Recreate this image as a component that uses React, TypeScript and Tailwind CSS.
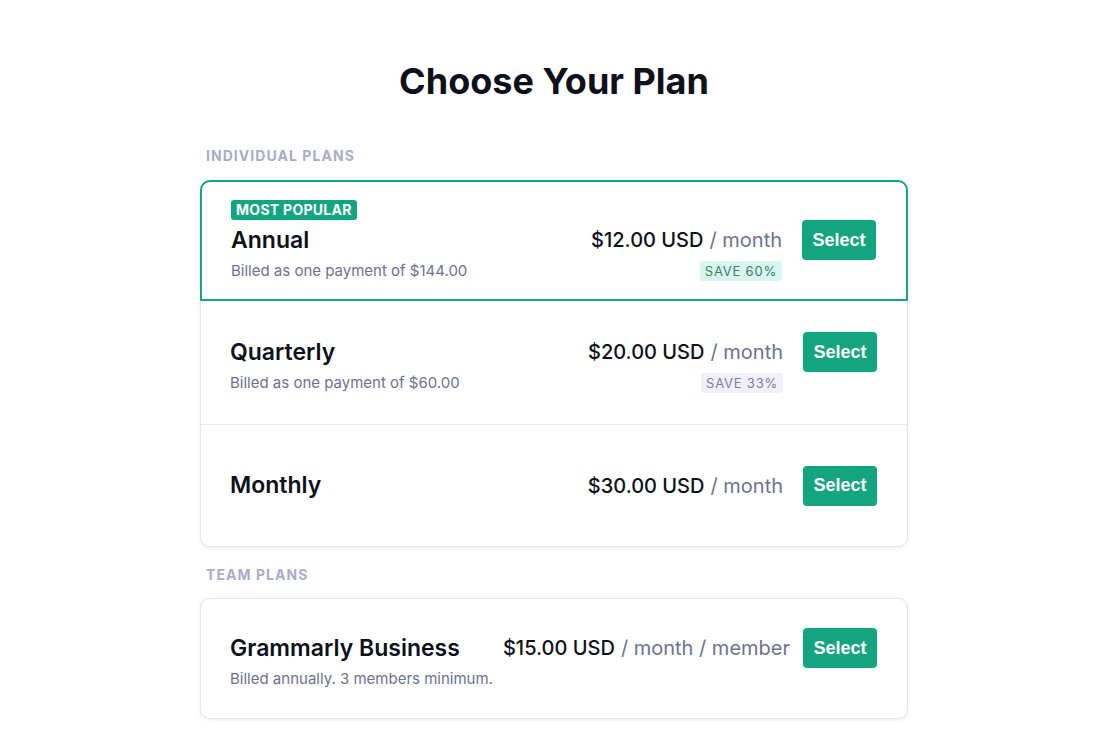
import React from 'react';

type Plan = {
    name: string;
    price: string;
    unit: string;
    note?: string;
    save?: string;
    saveTone?: 'green' | 'gray';
    popular?: boolean;
    tight?: boolean;
};

const individual: Plan[] = [
    { name: 'Annual', price: '$12.00 USD', unit: '/ month', note: 'Billed as one payment of $144.00', save: 'SAVE 60%', saveTone: 'green', popular: true },
    { name: 'Quarterly', price: '$20.00 USD', unit: '/ month', note: 'Billed as one payment of $60.00', save: 'SAVE 33%', saveTone: 'gray' },
    { name: 'Monthly', price: '$30.00 USD', unit: '/ month' },
];

const team: Plan = { name: 'Grammarly Business', price: '$15.00 USD', unit: '/ month / member', note: 'Billed annually. 3 members minimum.', tight: true };

function PlanRow({ plan }: { plan: Plan }) {
    return (
        <div>
            {plan.popular && (
                <span className="block h-5 w-fit rounded-[3px] bg-[#13a480] px-[5px] text-[14px] font-bold leading-5 tracking-[0.02em] text-white">
                    MOST POPULAR
                </span>
            )}
            <div className="flex items-start justify-between">
                <div>
                    <div className="flex h-10 items-center text-[23px] font-semibold text-[#0e101a]">{plan.name}</div>
                    {plan.note && <p className="mt-px text-[15px] leading-5 text-[#6d7291]">{plan.note}</p>}
                </div>
                <div className={plan.tight ? 'flex items-start gap-[13px]' : 'flex items-start gap-5'}>
                    <div className="flex flex-col items-end">
                        <div className="flex h-10 items-center text-[20px] whitespace-nowrap">
                            <span className="font-medium text-[#0e101a]">{plan.price}</span>
                            <span className="ml-[6px] text-[#6d7291]">{plan.unit}</span>
                        </div>
                        {plan.save && (
                            <span
                                className={
                                    plan.saveTone === 'green'
                                        ? 'mt-px h-5 rounded-[3px] bg-[#d8f6ee] px-[5px] text-[13px] leading-5 tracking-[0.06em] text-[#3a7f6c]'
                                        : 'mt-px h-5 rounded-[3px] bg-[#eff0fa] px-[5px] text-[13px] leading-5 tracking-[0.06em] text-[#7a7f9e]'
                                }
                            >
                                {plan.save}
                            </span>
                        )}
                    </div>
                    <button
                        type="button"
                        className="h-10 w-[74px] rounded-[4px] bg-[#13a480] text-[18px] font-bold text-white font-['Liberation_Sans',Arial,sans-serif]"
                    >
                        Select
                    </button>
                </div>
            </div>
        </div>
    );
}

export default function App() {
    return (
        <div className="min-h-screen bg-white font-['Inter',sans-serif]">
            <div className="flex justify-center pr-[2px]">
                <div className="w-[708px] pt-[59px] pb-6">
                    <h1 className="text-center text-[36px] leading-[44px] font-bold text-[#0e101a]">Choose Your Plan</h1>

                    <h2 className="mt-[45px] ml-[6px] text-[14px] leading-4 font-bold tracking-[0.075em] text-[#a8adc8]">INDIVIDUAL PLANS</h2>
                    <div className="mt-4 rounded-[10px] border border-[#e4e6f2] bg-white shadow-[0_1px_4px_rgba(30,40,90,0.08)]">
                        <div className="-mx-px -mt-px flex h-[121px] flex-col justify-center rounded-t-[10px] border-2 border-[#13a480] pl-[29px] pr-[30px]">
                            <PlanRow plan={individual[0]} />
                        </div>
                        <div className="flex h-[124px] flex-col justify-center border-b border-[#e9eaf4] pl-[29px] pr-[30px]">
                            <PlanRow plan={individual[1]} />
                        </div>
                        <div className="flex h-[121px] flex-col justify-center pl-[29px] pr-[30px]">
                            <PlanRow plan={individual[2]} />
                        </div>
                    </div>

                    <h2 className="mt-5 ml-[6px] text-[14px] leading-4 font-bold tracking-[0.075em] text-[#a8adc8]">TEAM PLANS</h2>
                    <div className="mt-[15px] flex h-[121px] flex-col justify-center rounded-[10px] border border-[#e4e6f2] bg-white pl-[29px] pr-[30px] shadow-[0_1px_4px_rgba(30,40,90,0.08)]">
                        <PlanRow plan={team} />
                    </div>
                </div>
            </div>
        </div>
    );
}
